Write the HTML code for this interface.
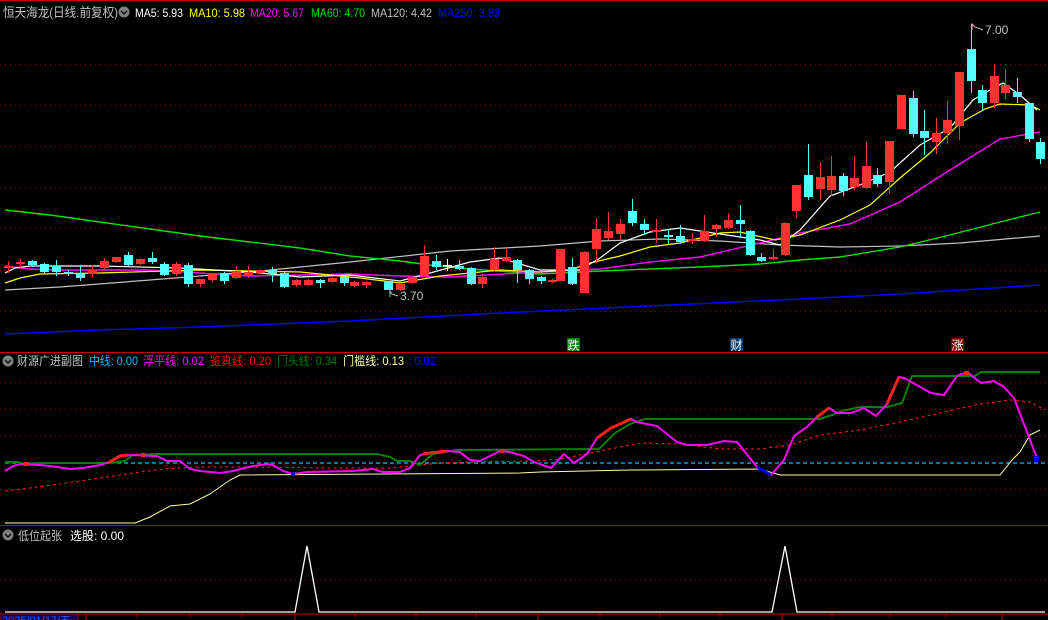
<!DOCTYPE html>
<html><head><meta charset="utf-8"><style>
html,body{margin:0;padding:0;background:#000;width:1048px;height:620px;overflow:hidden}
svg{display:block}
text{font-family:"Liberation Sans","Noto Sans CJK SC",sans-serif;font-size:12px}
</style></head><body>
<svg id="s" width="1048" height="620" viewBox="0 0 1048 620" xmlns="http://www.w3.org/2000/svg">
<rect width="1048" height="620" fill="#000"/>
<g stroke="#a00000" stroke-dasharray="1,4" stroke-width="1">
<line x1="0" y1="64.5" x2="1048" y2="64.5"/><line x1="0" y1="105.5" x2="1048" y2="105.5"/>
<line x1="0" y1="146.5" x2="1048" y2="146.5"/><line x1="0" y1="187.5" x2="1048" y2="187.5"/>
<line x1="0" y1="228.5" x2="1048" y2="228.5"/><line x1="0" y1="270.5" x2="1048" y2="270.5"/>
<line x1="0" y1="311.5" x2="1048" y2="311.5"/>
<line x1="0" y1="382.5" x2="1048" y2="382.5"/><line x1="0" y1="409.5" x2="1048" y2="409.5"/>
<line x1="0" y1="436.5" x2="1048" y2="436.5"/><line x1="0" y1="489.5" x2="1048" y2="489.5"/>
<line x1="0" y1="579.5" x2="1048" y2="579.5"/>
</g>
<line x1="0" y1="0.5" x2="1048" y2="0.5" stroke="#c00000"/>
<line x1="0" y1="352.5" x2="1048" y2="352.5" stroke="#c00000"/>
<line x1="0" y1="525.5" x2="1048" y2="525.5" stroke="#c00000"/>
<g fill="none" stroke-width="1.2">
<polyline stroke="#0000ff" stroke-width="1.5" points="5,334 100,330 200,327 350,321 500,313 650,306 800,299 900,294 1040,285"/>
<polyline stroke="#c0c0c0" points="5,290 60,287 150,280 250,272 350,262 450,251 540,246 600,241 660,239 720,241 780,245 840,247 900,246 960,243 1040,236"/>
<polyline stroke="#00e000" stroke-width="1.4" points="5,210 50,215 100,222 150,229 200,236 250,242 300,248 350,256 400,261 430,265 470,269 540,274 600,271 700,267 760,264 800,260 840,257 900,247 950,235 1000,222 1040,212"/>
<polyline stroke="#ff00ff" stroke-width="1.4" points="5,266 30,269 60,270 150,270 250,276 350,274 400,276 450,277 540,272 600,269 650,262 700,257 760,243 800,233 850,224 900,202 950,170 1000,139 1040,132"/>
<polyline stroke="#ffff00" points="5,283 20,278 40,274 100,273 200,270 300,272 360,278 400,283 440,276 500,270 540,272 570,270 590,263 620,256 650,247 680,243 720,233 740,232 775,240 800,235 840,220 870,205 900,178 930,153 960,123 985,109 1000,104 1030,105 1040,110"/>
<polyline stroke="#ffffff" points="5,273 15,268 30,266 100,266 180,268 250,272 300,277 350,275 400,281 430,273 470,262 500,258 540,270 580,270 600,258 620,243 650,232 680,228 720,234 760,240 780,245 800,230 830,196 860,185 890,172 920,145 950,128 973,100 990,90 1003,83 1020,95 1037,110"/>
</g>
<g id="candles"></g>
<polyline points="983,30 975,27 972,24 972,30" fill="none" stroke="#c0c0c0"/>
<text x="985" y="34" fill="#c0c0c0">7.00</text>
<polyline points="398,296 392,294 390,291 390,297" fill="none" stroke="#c0c0c0"/>
<text x="400" y="300" fill="#c0c0c0">3.70</text>
<rect x="567" y="338" width="13" height="13" fill="#008000"/><text x="567.5" y="349.5" fill="#fff">跌</text>
<rect x="730" y="338" width="13" height="13" fill="#003a70"/><text x="730.5" y="349.5" fill="#fff">财</text>
<rect x="951" y="338" width="13" height="13" fill="#800000"/><text x="951.5" y="349.5" fill="#fff">涨</text>
<g lengthAdjust="spacingAndGlyphs">
<text x="3" y="17" fill="#c0c0c0" textLength="115" lengthAdjust="spacingAndGlyphs" style="font-size:13px">恒天海龙(日线.前复权)</text>
<text x="135" y="17" fill="#fff" textLength="48" lengthAdjust="spacingAndGlyphs">MA5: 5.93</text>
<text x="189" y="17" fill="#ffff00" textLength="56" lengthAdjust="spacingAndGlyphs">MA10: 5.98</text>
<text x="250" y="17" fill="#ff00ff" textLength="54" lengthAdjust="spacingAndGlyphs">MA20: 5.67</text>
<text x="311" y="17" fill="#00e000" textLength="54" lengthAdjust="spacingAndGlyphs">MA60: 4.70</text>
<text x="371" y="17" fill="#c0c0c0" textLength="61" lengthAdjust="spacingAndGlyphs">MA120: 4.42</text>
<text x="438" y="17" fill="#0000ff" textLength="62" lengthAdjust="spacingAndGlyphs">MA250: 3.83</text>
</g>
<circle cx="124" cy="12" r="5.5" fill="#808080"/><polyline points="121,11 124,14 127,11" fill="none" stroke="#000" stroke-width="1.3"/>
<circle cx="8" cy="361" r="5.5" fill="#808080"/><polyline points="5,360 8,363 11,360" fill="none" stroke="#000" stroke-width="1.3"/>
<text x="17" y="365" fill="#c0c0c0" textLength="66" lengthAdjust="spacingAndGlyphs">财源广进副图</text>
<text x="89" y="365" fill="#1ab8ff" textLength="49" lengthAdjust="spacingAndGlyphs">中线: 0.00</text>
<text x="143" y="365" fill="#ff00ff" textLength="61" lengthAdjust="spacingAndGlyphs">浮平线: 0.02</text>
<text x="210" y="365" fill="#ff0000" textLength="61" lengthAdjust="spacingAndGlyphs">鉴真线: 0.20</text>
<text x="277" y="365" fill="#008000" textLength="60" lengthAdjust="spacingAndGlyphs">门头线: 0.34</text>
<text x="343" y="365" fill="#ffffa0" textLength="61" lengthAdjust="spacingAndGlyphs">门槛线: 0.13</text>
<text x="408" y="365" fill="#0000ff" textLength="28" lengthAdjust="spacingAndGlyphs">: 0.02</text>
<g fill="none">
<line x1="5" y1="463" x2="1045" y2="463" stroke="#00bfff" stroke-width="1.2" stroke-dasharray="4,3"/>
<polyline stroke="#ff2020" stroke-width="1" stroke-dasharray="3,3" points="5,491 30,488 60,484 100,478 140,472 165,469 200,467 260,467 330,468 390,468 410,466 440,463 470,462 534,461 560,459 600,451 640,443 680,444 720,449 760,449 790,445 820,435 860,430 900,422 940,413 980,404 1010,400 1030,402 1045,410"/>
<polyline stroke="#ffffa0" stroke-width="1" points="5,523 135,523 150,517 170,506 190,504 210,494 230,480 240,475 520,473 540,472 630,470 760,469 780,475 1000,475 1012,460 1020,452 1030,435 1040,430"/>
<polyline stroke="#008000" stroke-width="2" points="5,462 18,462 25,464 40,463 110,463 125,461 133,455 157,454 377,454 390,457 397,461 410,461 420,465 433,454 457,450 599,449 605,443 615,433 630,424 645,419 820,419 832,415 842,411 860,407 887,407 902,403 908,387 912,376 975,376 981,372 1040,372"/>
<polyline stroke="#ff00ff" stroke-width="2" points="5,471 13,466 20,464 40,465 50,466 70,469 83,468 100,465 110,462 120,456 133,455 157,456 167,461 180,461 190,469 200,471 220,473 233,471 253,466 267,464 273,465 283,471 293,474 307,472 353,471 373,469 383,472 400,472 410,468 420,455 430,453 447,451 460,452 470,460 480,461 500,451 510,452 524,456 534,462 551,468 564,454 574,463 587,454 597,438 611,428 631,419 637,422 657,426 677,442 687,445 707,445 724,441 737,442 757,467 771,475 784,460 794,436 807,427 817,417 829,408 837,413 851,413 864,408 876,416 887,404 899,377 904,378 931,393 944,395 957,376 967,372 981,383 994,381 1004,387 1014,398 1027,432 1037,458"/>
<polyline stroke="#ff2020" stroke-width="3" points="597,438 611,428 631,419"/>
<polyline stroke="#ff2020" stroke-width="3" points="108,463 120,456 128,455"/>
<polyline stroke="#ff2020" stroke-width="3" points="423,454 430,453 447,451"/>
<polyline stroke="#ff2020" stroke-width="3" points="817,417 829,408"/>
<polyline stroke="#ff2020" stroke-width="3" points="887,404 899,377"/>
<polyline stroke="#0000ff" stroke-width="3" points="757,467 771,475"/>
</g>
<rect x="24" y="462" width="5" height="4" fill="#ff2020"/><rect x="141" y="453" width="4" height="4" fill="#ff2020"/>
<rect x="500" y="449" width="4" height="4" fill="#ff2020"/><rect x="291" y="472" width="4" height="4" fill="#0000ff"/>
<rect x="964" y="371" width="5" height="4" fill="#ff2020"/><rect x="1034" y="456" width="5" height="5" fill="#0000ff"/>
<circle cx="8" cy="535" r="5.5" fill="#808080"/><polyline points="5,534 8,537 11,534" fill="none" stroke="#000" stroke-width="1.3"/>
<text x="18" y="540" fill="#c0c0c0" textLength="44" lengthAdjust="spacingAndGlyphs">低位起张</text>
<text x="70" y="540" fill="#fff" textLength="54" lengthAdjust="spacingAndGlyphs">选股: 0.00</text>
<polyline fill="none" stroke="#fff" stroke-width="1.3" points="5,612 295,612 307,546 319,612 772,612 785,546 797,612 1045,612"/>
<line x1="0" y1="614" x2="1048" y2="614" stroke="#c00000"/>
<rect x="0" y="614" width="78" height="6" fill="#000060" stroke="#c00000" stroke-width="0.8"/>
<text x="2" y="624" fill="#2b5cff" style="font-size:11px">2025/01/17/五</text>
<g stroke="#c00000"><line x1="86" y1="614" x2="86" y2="620"/><line x1="295" y1="614" x2="295" y2="620"/><line x1="538" y1="614" x2="538" y2="620"/><line x1="782" y1="614" x2="782" y2="620"/><line x1="1002" y1="614" x2="1002" y2="620"/>
<line x1="137" y1="614" x2="137" y2="617"/><line x1="190" y1="614" x2="190" y2="617"/><line x1="242" y1="614" x2="242" y2="617"/><line x1="355" y1="614" x2="355" y2="617"/><line x1="416" y1="614" x2="416" y2="617"/><line x1="476" y1="614" x2="476" y2="617"/><line x1="600" y1="614" x2="600" y2="617"/><line x1="660" y1="614" x2="660" y2="617"/><line x1="720" y1="614" x2="720" y2="617"/><line x1="832" y1="614" x2="832" y2="617"/><line x1="890" y1="614" x2="890" y2="617"/><line x1="946" y1="614" x2="946" y2="617"/></g>
</svg>
<script>
var d=[
[8,'r',266,268,261,273],[20,'r',262,264,259,268],[32,'c',261,265,260,267],[44,'c',264,272,263,273],[56,'c',266,272,260,276],[68,'c',272,274,270,276],[80,'c',274,278,265,281],[92,'r',270,274,265,277],[104,'r',261,268,258,270],[116,'r',257,262,257,263],[128,'c',255,265,252,266],[140,'r',259,264,258,265],[152,'c',258,262,252,264],[164,'c',264,275,262,276],[176,'r',264,274,262,276],[188,'c',265,284,263,287],[200,'r',279,284,279,287],[212,'r',274,280,273,282],[224,'c',273,281,272,284],[236,'r',271,278,266,279],[248,'r',272,276,266,278],[260,'r',270,273,269,274],[272,'c',270,274,267,282],[284,'c',273,287,272,288],[296,'r',280,285,279,287],[308,'r',280,285,279,286],[320,'c',280,283,279,288],[332,'r',278,282,277,283],[344,'c',277,283,276,286],
[354,'r',282,286,281,287],[366,'r',282,285,281,288],[388,'c',281,290,281,290],[400,'r',284,290,283,291],[412,'r',277,283,276,284],[424,'r',256,276,245,277],[436,'c',261,267,255,270],[447,'w',265,266,259,271],[459,'c',266,269,260,270],[471,'c',268,284,267,285],[482,'r',277,284,274,288],[494,'r',259,270,247,271],[506,'r',257,261,248,262],[517,'c',260,270,259,283],[529,'c',270,279,269,284],[541,'c',277,281,276,284],[552,'r',280,282,279,283],
[560,'r',249,281,249,281],[572,'c',267,284,258,285],[584,'r',252,293,251,293],[596,'r',229,249,218,263],[608,'r',231,238,212,240],[620,'r',224,234,219,240],[632,'c',211,223,199,226],[644,'c',224,230,219,235],[656,'r',230,232,219,243],[668,'c',235,237,229,244],[680,'c',236,242,225,243],[692,'r',239,241,233,244],[704,'r',231,241,215,242],[716,'r',225,229,224,237],[728,'r',220,228,213,229],[740,'c',220,224,205,238],[750,'c',231,255,230,256],[761,'c',257,261,253,262],[773,'r',257,259,249,260],[785,'r',223,255,222,256],[796,'r',185,211,185,218],[808,'c',175,197,144,200],[820,'r',177,189,162,200],[831,'r',176,190,156,196],[843,'c',176,191,173,196],[854,'r',178,187,156,190],[866,'r',166,188,142,189],[877,'c',175,184,168,187],[889,'r',141,182,141,194],[901,'r',95,129,95,129],[913,'c',98,134,91,137],[924,'c',131,138,110,155],[936,'r',133,142,118,154],[947,'r',120,133,101,143],[959,'r',72,126,72,140],[971,'c',49,81,24,93],[982,'c',90,103,85,110],[994,'r',76,103,64,108],[1005,'r',85,93,69,99],[1017,'c',92,97,78,103],[1029,'c',103,139,103,142],[1040,'c',142,159,138,164]];
var g=document.getElementById('candles'),h='';
for(var i=0;i<d.length;i++){var c=d[i],col=c[1]=='r'?'#ff3232':(c[1]=='c'?'#54fcfc':'#ffffff');
h+='<line x1="'+(c[0]+0.5)+'" y1="'+c[4]+'" x2="'+(c[0]+0.5)+'" y2="'+c[5]+'" stroke="'+col+'" stroke-width="1"/>';
var hh=Math.max(1.5,c[3]-c[2]);
h+='<rect x="'+(c[0]-4)+'" y="'+c[2]+'" width="9" height="'+hh+'" fill="'+col+'"/>';}
g.innerHTML=h;
</script>
</body></html>
